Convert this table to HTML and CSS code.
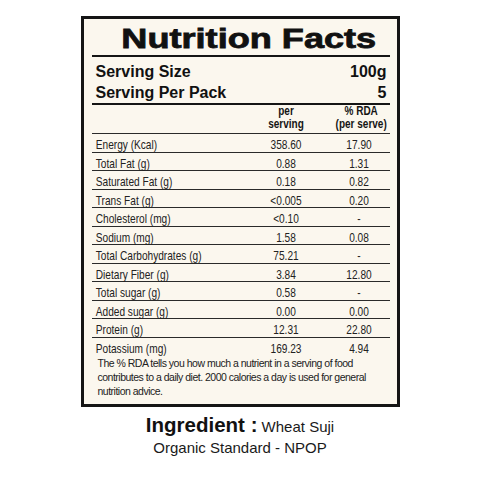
FILE: index.html
```html
<!DOCTYPE html>
<html lang="en">
<head>
<meta charset="utf-8">
<title>Nutrition Facts</title>
<link rel="stylesheet" href="styles.css">
</head>
<body>
<main class="page">
  <section class="label">
    <h1 class="title"><span class="title-text">Nutrition Facts</span></h1>
    <div class="serving">
      <div class="serving-row"><span>Serving Size</span><span>100g</span></div>
      <div class="serving-row"><span>Serving Per Pack</span><span>5</span></div>
    </div>
    <div class="facts">
      <div class="row head">
        <span class="name"></span>
        <span class="val">per<br>serving</span>
        <span class="val rda">% RDA<br>(per serve)</span>
      </div>
      <div class="row"><span class="name">Energy (Kcal)</span><span class="val">358.60</span><span class="val rda">17.90</span></div>
      <div class="row"><span class="name">Total Fat (g)</span><span class="val">0.88</span><span class="val rda">1.31</span></div>
      <div class="row"><span class="name">Saturated Fat (g)</span><span class="val">0.18</span><span class="val rda">0.82</span></div>
      <div class="row"><span class="name">Trans Fat (g)</span><span class="val">&lt;0.005</span><span class="val rda">0.20</span></div>
      <div class="row"><span class="name">Cholesterol (mg)</span><span class="val">&lt;0.10</span><span class="val rda">-</span></div>
      <div class="row"><span class="name">Sodium (mg)</span><span class="val">1.58</span><span class="val rda">0.08</span></div>
      <div class="row"><span class="name">Total Carbohydrates (g)</span><span class="val">75.21</span><span class="val rda">-</span></div>
      <div class="row"><span class="name">Dietary Fiber (g)</span><span class="val">3.84</span><span class="val rda">12.80</span></div>
      <div class="row"><span class="name">Total sugar (g)</span><span class="val">0.58</span><span class="val rda">-</span></div>
      <div class="row"><span class="name">Added sugar (g)</span><span class="val">0.00</span><span class="val rda">0.00</span></div>
      <div class="row"><span class="name">Protein (g)</span><span class="val">12.31</span><span class="val rda">22.80</span></div>
      <div class="row last"><span class="name">Potassium (mg)</span><span class="val">169.23</span><span class="val rda">4.94</span></div>
    </div>
    <p class="note">The % RDA tells you how much a nutrient in a serving of food contributes to a daily diet. 2000 calories a day is used for general nutrition advice.</p>
  </section>
  <div class="ingredients">
    <p class="ingredient"><strong>Ingredient :</strong> Wheat Suji</p>
    <p class="standard">Organic Standard - NPOP</p>
  </div>
</main>
</body>
</html>
```
FILE: styles.css
```css
html, body {
  margin: 0;
  padding: 0;
  background: #ffffff;
}

body {
  font-family: "Liberation Sans", Arial, sans-serif;
  color: #111;
}

.page {
  width: 480px;
  height: 480px;
  padding-top: 16px;
  box-sizing: border-box;
}

.label {
  width: 319px;
  margin: 0 auto;
  box-sizing: border-box;
  border: 3px solid #151515;
  background: #fbf7ee;
  padding: 4px 7px 6px 8px;
}

.title {
  margin: 0;
  font-size: 28px;
  line-height: 32px;
  font-weight: 700;
  text-align: center;
  padding-left: 16px;
  border-bottom: 2px solid #151515;
}

.title-text {
  display: inline-block;
  transform: scaleX(1.29);
  -webkit-text-stroke: 0.8px #111;
  color: #111;
}

.serving {
  padding: 4px 3px 0 4px;
  border-bottom: 2px solid #151515;
}

.serving-row {
  display: flex;
  justify-content: space-between;
  font-size: 16px;
  line-height: 21px;
  font-weight: 700;
}

.facts {
  color: #222;
}

.row {
  display: grid;
  grid-template-columns: 158px 72px 1fr;
  font-size: 13.5px;
  padding-top: 5px;
  line-height: 12.5px;
  border-bottom: 1px solid #2a2a2a;
}

.row.last {
  border-bottom: none;
}

.row.head {
  font-weight: 700;
  font-size: 12.5px;
  line-height: 13px;
  padding: 0 0 2px;
  color: #151515;
}

.name,
.val {
  white-space: nowrap;
  transform: scaleX(0.75);
}

.row.head .val {
  transform: scaleX(0.8);
}

.name {
  padding-left: 5px;
  transform-origin: 0 50%;
}

.val {
  text-align: center;
  transform-origin: 50% 50%;
}

.rda {
  padding-left: 8px;
}

.note {
  margin: 0;
  padding: 1px 0 0 6px;
  font-size: 10.5px;
  letter-spacing: -0.5px;
  line-height: 14px;
  color: #222;
}

.ingredients {
  text-align: center;
  margin-top: 6px;
}

.ingredient {
  margin: 0;
  font-size: 15px;
  line-height: 24px;
  color: #1a1a1a;
}

.ingredient strong {
  font-size: 20.5px;
  font-weight: 700;
  color: #111;
}

.standard {
  margin: 0;
  font-size: 15px;
  line-height: 18px;
  color: #1a1a1a;
}
```
